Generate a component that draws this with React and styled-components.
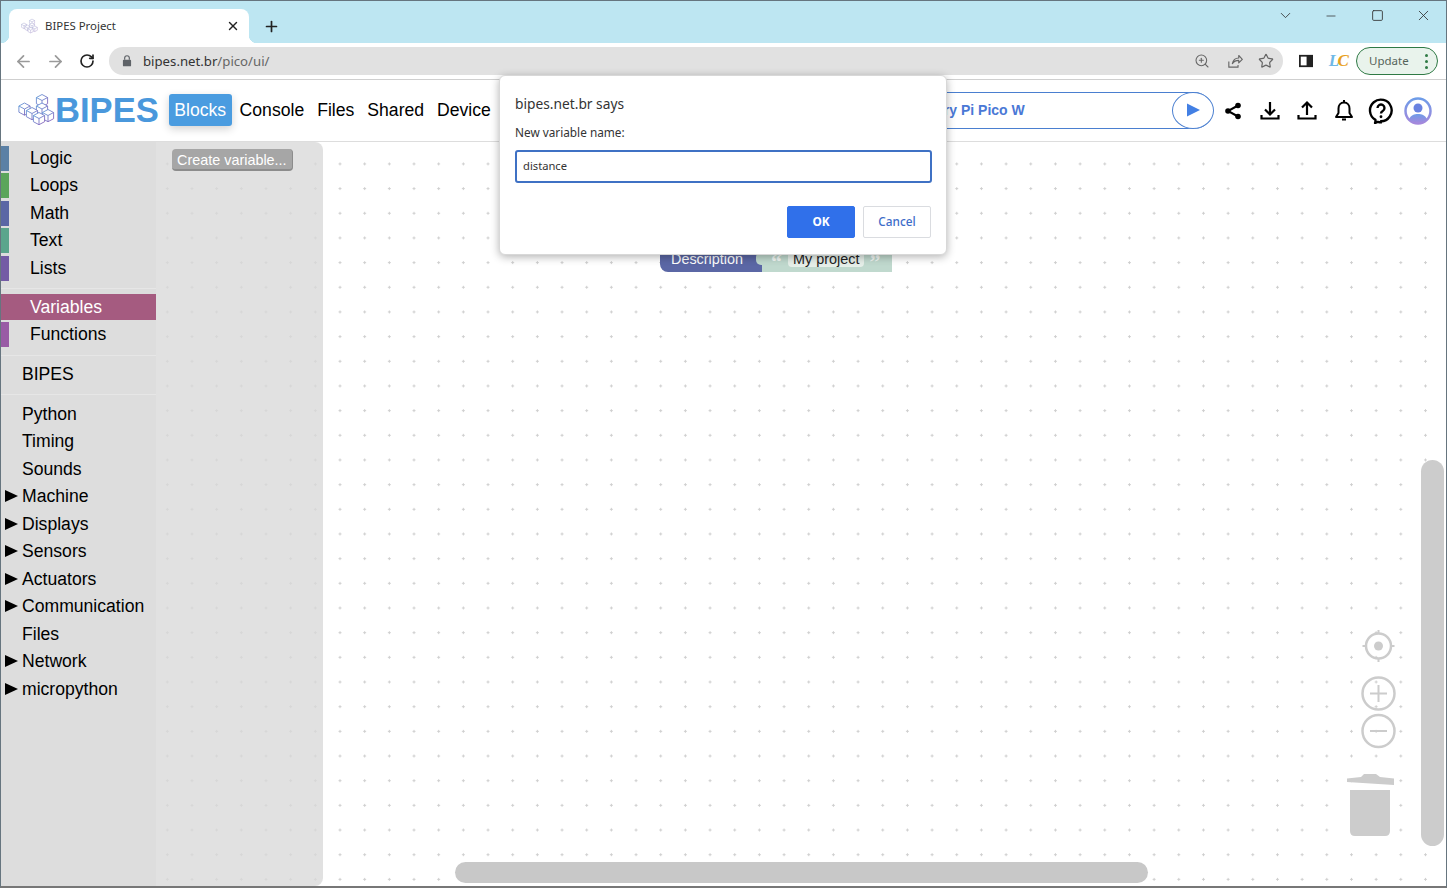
import React from 'react';
import styled, { createGlobalStyle } from 'styled-components';
import {
  ArrowLeft,
  ArrowRight,
  RotateCw,
  ChevronDown,
  Minus,
  Square,
  X,
  Plus,
  ZoomIn,
  Star,
} from 'lucide-react';

const UI_FONT = `"Noto Sans", "Open Sans", sans-serif`;
const PAGE_FONT = `"Liberation Sans", Arial, sans-serif`;

const Global = createGlobalStyle`
  html, body { margin: 0; padding: 0; height: 100%; overflow: hidden; background: #fff; }
  * { box-sizing: border-box; }
`;

const Frame = styled.div`
  position: relative;
  width: 1447px;
  height: 888px;
  display: flex;
  flex-direction: column;
  overflow: hidden;
  background: #fff;
  border: 1px solid #66757f;
  border-bottom: 2px solid #777;
  font-family: ${PAGE_FONT};
`;

const TabStrip = styled.div`
  height: 42px;
  flex: none;
  display: flex;
  align-items: flex-end;
  padding-left: 8px;
  background: #bde6f2;
`;

const Tab = styled.div`
  position: relative;
  width: 240px;
  height: 34px;
  display: flex;
  align-items: center;
  padding: 0 9px 0 12px;
  background: #fff;
  border-radius: 8px 8px 0 0;
  font: 11.4px ${UI_FONT};
  color: #333;
  &::before,
  &::after {
    content: '';
    position: absolute;
    bottom: 0;
    width: 8px;
    height: 8px;
  }
  &::before {
    left: -8px;
    background: radial-gradient(circle at 0 0, transparent 8px, #fff 8.5px);
  }
  &::after {
    right: -8px;
    background: radial-gradient(circle at 100% 0, transparent 8px, #fff 8.5px);
  }
`;

const TabTitle = styled.span`
  flex: 1;
  margin: 0 0 2px 7px;
`;

const NewTab = styled.div`
  width: 28px;
  height: 34px;
  margin-left: 8px;
  display: flex;
  align-items: center;
  justify-content: center;
  color: #222;
`;

const WindowControls = styled.div`
  margin-left: auto;
  align-self: flex-start;
  display: flex;
`;

const WindowButton = styled.div`
  width: 46px;
  height: 29px;
  display: flex;
  align-items: center;
  justify-content: center;
  color: #333;
`;

const Toolbar = styled.div`
  height: 37px;
  flex: none;
  display: flex;
  align-items: flex-start;
  padding: 4px 8px 0 6px;
  background: #fff;
  border-bottom: 1px solid #cfcfcf;
`;

const NavButton = styled.div`
  width: 32px;
  height: 28px;
  flex: none;
  display: flex;
  align-items: center;
  justify-content: center;
  color: ${p => (p.$dim ? '#9a9a9a' : '#333')};
`;

const AddressBar = styled.div`
  flex: 1;
  height: 28px;
  margin-left: 6px;
  margin-right: 7px;
  display: flex;
  align-items: center;
  padding: 0 1px 0 11px;
  border-radius: 14px;
  background: #e1e1e1;
  font: 13.2px ${UI_FONT};
  color: #333;
`;

const UrlPath = styled.span`
  color: #666;
`;

const Url = styled.div`
  flex: 1;
  margin-left: 9px;
`;

const AddressIcon = styled.div`
  width: 32px;
  height: 28px;
  display: flex;
  align-items: center;
  justify-content: center;
  color: #666;
`;

const ExtensionMark = styled.div`
  width: 32px;
  height: 28px;
  flex: none;
  display: flex;
  align-items: center;
  justify-content: center;
  font: italic 700 17px "Liberation Serif", serif;
  letter-spacing: -1.5px;
`;

const ExtensionLetter = styled.span`
  color: ${p => p.$color};
`;

const UpdatePill = styled.div`
  width: 82px;
  height: 28px;
  margin-left: 2px;
  flex: none;
  display: flex;
  align-items: center;
  justify-content: space-between;
  padding: 0 9px 2px 12px;
  border: 1px solid #2f7a45;
  border-radius: 14px;
  background: #e9f3ec;
  font: 11.5px ${UI_FONT};
  color: #55635a;
`;

const MenuDots = styled.span`
  display: flex;
  flex-direction: column;
  gap: 3px;
  margin-top: 2px;
  i {
    display: block;
    width: 3px;
    height: 3px;
    border-radius: 50%;
    background: #2f7a45;
  }
`;

const AppHeader = styled.header`
  height: 62px;
  flex: none;
  display: flex;
  align-items: center;
  padding: 0 10px 2px 17px;
  background: #fff;
  border-bottom: 1px solid #ddd;
`;

const LogoText = styled.span`
  margin-top: 2px;
  font-size: 34.6px;
  font-weight: 700;
  color: #4a98dc;
`;

const Nav = styled.nav`
  margin-left: 10px;
  display: flex;
  align-items: center;
  gap: 13px;
`;

const NavItem = styled.div`
  font-size: 17.6px;
  line-height: 32px;
  color: ${p => (p.$active ? '#fff' : '#000')};
  ${p =>
    p.$active &&
    `
    margin-right: -5px;
    padding: 0 5.5px;
    border-radius: 3px;
    background: #4a9ce0;
    box-shadow: 0 3px 8px rgba(0, 0, 0, 0.18);
  `}
`;

const DevicePill = styled.div`
  flex: 1;
  height: 37px;
  margin: 2px 0 0 8px;
  display: flex;
  align-items: center;
  padding: 0 0 2px 388px;
  position: relative;
  border: 1.5px solid #4a7fd0;
  border-radius: 19px;
  font-size: 14px;
  font-weight: 700;
  color: #4a78d6;
`;

const PlayButton = styled.div`
  position: absolute;
  right: -1.5px;
  top: -1.5px;
  width: 42px;
  height: 37px;
  display: flex;
  align-items: center;
  justify-content: center;
  border: 1.5px solid #4a7fd0;
  border-radius: 50%;
  background: #fff;
`;

const HeaderIcons = styled.div`
  margin: 2px 0 0 1px;
  display: flex;
`;

const HeaderIcon = styled.div`
  width: 37px;
  height: 37px;
  display: flex;
  align-items: center;
  justify-content: center;
`;

const Main = styled.main`
  flex: 1;
  min-height: 0;
  display: flex;
`;

const Sidebar = styled.aside`
  width: 155px;
  flex: none;
  padding-top: 2.25px;
  background: #ddd;
`;

const Row = styled.div`
  position: relative;
  height: ${p => (p.$selected ? 28 : 27.5)}px;
  display: flex;
  align-items: center;
  padding-left: ${p => (p.$category ? 29 : 21)}px;
  font-size: 17.6px;
  color: ${p => (p.$selected ? '#fff' : '#000')};
  &::before {
    content: '';
    position: absolute;
    z-index: 0;
    left: 0;
    top: 1.25px;
    bottom: 1.25px;
    width: ${p => (p.$selected ? '100%' : '8px')};
    background: ${p => p.$color || 'transparent'};
  }
  span {
    position: relative;
  }
`;

const Arrow = styled.i`
  position: absolute;
  left: 4px;
  top: 7px;
  border-left: 13px solid #000;
  border-top: 6.5px solid transparent;
  border-bottom: 6.5px solid transparent;
`;

const Separator = styled.div`
  height: ${p => p.$height}px;
  padding-top: ${p => p.$line}px;
  &::after {
    content: '';
    display: block;
    height: 1px;
    background: #e6e6e6;
  }
`;

const Workspace = styled.section`
  position: relative;
  flex: 1;
  min-width: 0;
  overflow: hidden;
  background: #fff;
`;

const GridLayer = styled.svg`
  position: absolute;
  inset: 0;
  width: 100%;
  height: 100%;
`;

const Flyout = styled.div`
  position: relative;
  width: 167px;
  height: 100%;
  padding: 7px 0 0 16px;
  background: rgba(216, 216, 216, 0.78);
  border-radius: 0 8px 8px 0;
`;

const FlyoutButton = styled.div`
  width: 121px;
  height: 22px;
  padding-left: 5px;
  border-radius: 4px;
  background: #a6a6a6;
  border-right: 1px solid #8c8c8c;
  border-bottom: 2px solid #8c8c8c;
  font-size: 14.4px;
  line-height: 22px;
  color: #fff;
  white-space: nowrap;
`;

const Block = styled.div`
  position: absolute;
  left: 504px;
  top: 103px;
  height: 27px;
  display: flex;
  font-size: 14.4px;
`;

const BlockLabel = styled.div`
  position: relative;
  width: 102px;
  padding: 6px 0 0 11px;
  line-height: 17px;
  background: #5b67a5;
  border-radius: 0 0 0 8px;
  color: #fff;
  &::after {
    content: '';
    position: absolute;
    right: -1px;
    top: 7px;
    width: 7px;
    height: 13px;
    border-radius: 5px 0 0 5px;
    background: #c0d9ce;
  }
`;

const BlockValue = styled.div`
  width: 130px;
  display: flex;
  align-items: flex-start;
  padding: 7px 0 0 9px;
  background: #c0d9ce;
  color: #222;
`;

const Quote = styled.span`
  width: 18px;
  flex: none;
  height: 14px;
  font: 700 22px/20px "Liberation Serif", serif;
  color: #f2f7f4;
  &:last-child {
    margin-left: 5px;
  }
`;

const BlockField = styled.span`
  height: 15px;
  flex: none;
  line-height: 15px;
  padding: 0 5px;
  margin-left: -1px;
  border-radius: 4px;
  background: #e6efe9;
  white-space: nowrap;
`;

const VerticalThumb = styled.div`
  position: absolute;
  right: 2px;
  top: 318px;
  width: 23px;
  height: 386px;
  border-radius: 12px;
  background: #ccc;
`;

const HorizontalThumb = styled.div`
  position: absolute;
  left: 298.500px;
  bottom: 3px;
  width: 693px;
  height: 21.5px;
  border-radius: 11px;
  background: #c8c8c8;
`;

const CanvasControls = styled.svg`
  position: absolute;
  right: 48px;
  top: 486px;
  width: 52px;
  height: 212px;
`;

const Dialog = styled.div`
  position: absolute;
  left: 498px;
  top: 74px;
  width: 448px;
  height: 180px;
  padding: 17px 14px 0 15px;
  background: #fff;
  border: 1px solid #d8d8d8;
  border-radius: 6px;
  box-shadow: 0 2px 8px rgba(0, 0, 0, 0.3);
  font-family: ${UI_FONT};
  color: #333;
`;

const DialogTitle = styled.div`
  font-size: 13.75px;
  line-height: 22px;
`;

const DialogMessage = styled.div`
  margin-top: 9px;
  font-size: 11.8px;
  line-height: 17px;
`;

const DialogInput = styled.div`
  height: 33px;
  margin-top: 9px;
  padding-left: 6px;
  border: 2px solid #3f71c4;
  border-radius: 3px;
  font-size: 11.2px;
  line-height: 28px;
`;

const DialogActions = styled.div`
  margin: 23px 1px 0 0;
  display: flex;
  justify-content: flex-end;
  gap: 8px;
`;

const DialogButton = styled.div`
  width: 68px;
  height: 32px;
  text-align: center;
  font-size: 11.8px;
  line-height: 28px;
  border-radius: 2px;
  border: 1px solid ${p => (p.$primary ? '#3070ea' : '#dadce0')};
  background: ${p => (p.$primary ? '#3070ea' : '#fff')};
  color: ${p => (p.$primary ? '#fff' : '#3d6dc9')};
  font-weight: ${p => (p.$primary ? 700 : 500)};
`;

const categories = [
  { label: 'Logic', color: '#5b80a5' },
  { label: 'Loops', color: '#5ba55b' },
  { label: 'Math', color: '#5b67a5' },
  { label: 'Text', color: '#5ba58c' },
  { label: 'Lists', color: '#745ba5' },
];

const extensions = [
  { label: 'Python' },
  { label: 'Timing' },
  { label: 'Sounds' },
  { label: 'Machine', arrow: true },
  { label: 'Displays', arrow: true },
  { label: 'Sensors', arrow: true },
  { label: 'Actuators', arrow: true },
  { label: 'Communication', arrow: true },
  { label: 'Files' },
  { label: 'Network', arrow: true },
  { label: 'micropython', arrow: true },
];

const cubes = [
  [24, 7.5],
  [24, 16],
  [6.5, 16],
  [14, 20.5],
  [30, 22.5],
  [21, 25.5],
];

function CubeLogo({ size, height, id, muted }) {
  return (
    <svg width={size} height={height} viewBox="0 0 37 33" fill="none">
      <defs>
        <linearGradient id={id} x1="0" y1="0" x2="1" y2="1">
          <stop offset="0" stopColor={muted ? '#9aa6cf' : '#5f9bd8'} />
          <stop offset="1" stopColor={muted ? '#a88fc9' : '#8a5cb8'} />
        </linearGradient>
      </defs>
      {cubes.map(([x, y]) => (
        <g key={`${x}-${y}`} stroke={`url(#${id})`} strokeWidth="0.9" strokeLinejoin="round">
          <path
            fill="#fff"
            d={`M${x} ${y - 6}l5.6 3v6.2l-5.6 3-5.6-3v-6.2z`}
          />
          <path d={`M${x - 5.6} ${y - 3}l5.6 3 5.6-3M${x} ${y}v6.2`} />
        </g>
      ))}
    </svg>
  );
}

function Icon({ children, size = 24, ...rest }) {
  return (
    <svg width={size} height={size} viewBox="0 0 24 24" fill="none" {...rest}>
      {children}
    </svg>
  );
}

export default function App() {
  return (
    <Frame>
      <Global />
      <TabStrip>
        <Tab>
          <CubeLogo size={17} height={16} id="favicon" muted />
          <TabTitle>BIPES Project</TabTitle>
          <X size={14} strokeWidth={2.4} color="#222" />
        </Tab>
        <NewTab>
          <Plus size={17} strokeWidth={2.4} />
        </NewTab>
        <WindowControls>
          <WindowButton>
            <ChevronDown size={17} strokeWidth={1.2} />
          </WindowButton>
          <WindowButton>
            <Minus size={14} strokeWidth={1.3} />
          </WindowButton>
          <WindowButton>
            <Square size={13} strokeWidth={1.6} />
          </WindowButton>
          <WindowButton>
            <X size={17} strokeWidth={1.2} />
          </WindowButton>
        </WindowControls>
      </TabStrip>

      <Toolbar>
        <NavButton $dim>
          <ArrowLeft size={19} strokeWidth={2.2} />
        </NavButton>
        <NavButton $dim>
          <ArrowRight size={19} strokeWidth={2.2} />
        </NavButton>
        <NavButton>
          <RotateCw size={16} strokeWidth={2.5} color="#222" />
        </NavButton>
        <AddressBar>
          <Icon size={14} style={{ color: '#5f6368' }}>
            <rect x="5" y="10" width="14" height="11" rx="1.5" fill="currentColor" />
            <path d="M8 10V7a4 4 0 0 1 8 0v3" stroke="currentColor" strokeWidth="2" />
          </Icon>
          <Url>
            bipes.net.br<UrlPath>/pico/ui/</UrlPath>
          </Url>
          <AddressIcon>
            <ZoomIn size={16} strokeWidth={1.6} />
          </AddressIcon>
          <AddressIcon>
            <Icon size={17}>
              <path
                d="M4 12v8h13v-3M9 15c1-5 5-8 9-8V3.500l5 5.500-5 5v-3.500c-4 0-7 1.500-9 4.500z"
                stroke="currentColor"
                strokeWidth="1.6"
                strokeLinejoin="round"
              />
            </Icon>
          </AddressIcon>
          <AddressIcon>
            <Star size={16} strokeWidth={1.8} />
          </AddressIcon>
        </AddressBar>
        <NavButton>
          <Icon size={14}>
            <rect x="1.500" y="3" width="21" height="18" fill="#fff" stroke="#222" strokeWidth="3" />
            <rect x="13" y="3" width="10" height="18" fill="#222" />
          </Icon>
        </NavButton>
        <ExtensionMark>
          <ExtensionLetter $color="#6fb8e6">L</ExtensionLetter>
          <ExtensionLetter $color="#e8a020">C</ExtensionLetter>
        </ExtensionMark>
        <UpdatePill>
          Update
          <MenuDots>
            <i />
            <i />
            <i />
          </MenuDots>
        </UpdatePill>
      </Toolbar>

      <AppHeader>
        <CubeLogo size={37} height={33} id="logo" />
        <LogoText>BIPES</LogoText>
        <Nav>
          <NavItem $active>Blocks</NavItem>
          <NavItem>Console</NavItem>
          <NavItem>Files</NavItem>
          <NavItem>Shared</NavItem>
          <NavItem>Device</NavItem>
        </Nav>
        <DevicePill>
          Raspberry Pi Pico W
          <PlayButton>
            <svg width="16" height="16" viewBox="0 0 16 16">
              <path d="M2 1.500L15 8 2 14.500z" fill="#4380e4" />
            </svg>
          </PlayButton>
        </DevicePill>
        <HeaderIcons>
          <HeaderIcon>
            <Icon>
              <path d="M17 6.500L7 12l10 5.500" stroke="#000" strokeWidth="2" />
              <circle cx="17" cy="6.500" r="2.800" fill="#000" />
              <circle cx="7" cy="12" r="2.800" fill="#000" />
              <circle cx="17" cy="17.500" r="2.800" fill="#000" />
            </Icon>
          </HeaderIcon>
          <HeaderIcon>
            <Icon>
              <path
                d="M12 3v12M7 10.500l5 5 5-5M3.500 16v3.500h17V16"
                stroke="#000"
                strokeWidth="2.200"
              />
            </Icon>
          </HeaderIcon>
          <HeaderIcon>
            <Icon>
              <path
                d="M12 16V4M7 8.500l5-5 5 5M3.500 16v3.500h17V16"
                stroke="#000"
                strokeWidth="2.200"
              />
            </Icon>
          </HeaderIcon>
          <HeaderIcon>
            <Icon>
              <path
                d="M12 3.500c-3.600 0-5.500 2.800-5.500 6v4.500L4 18h16l-2.500-4V9.500c0-3.200-1.900-6-5.500-6z"
                stroke="#000"
                strokeWidth="2"
                strokeLinejoin="round"
              />
              <path d="M10 20.500h4" stroke="#000" strokeWidth="2" />
              <path d="M12 1v2.500" stroke="#000" strokeWidth="2" />
            </Icon>
          </HeaderIcon>
          <HeaderIcon>
            <Icon size={26}>
              <path
                d="M12 22.500c-1 0-2-.2-3-.5-1 .6-1.700 1-2.500 1 .4-1 .5-1.800.4-2.800A10 10 0 1 1 12 21.500z"
                stroke="#000"
                strokeWidth="2.200"
                strokeLinejoin="round"
              />
              <path
                d="M8.800 9.200a3.200 3.200 0 1 1 4.800 2.800c-1 .6-1.600 1.200-1.600 2.400"
                stroke="#000"
                strokeWidth="2.200"
              />
              <circle cx="12" cy="17.300" r="1.300" fill="#000" />
            </Icon>
          </HeaderIcon>
          <HeaderIcon>
            <svg width="28" height="28" viewBox="0 0 28 28" fill="none">
              <defs>
                <linearGradient id="avatar" x1="0" y1="0" x2="0" y2="1">
                  <stop offset="0" stopColor="#6e9ce8" />
                  <stop offset="1" stopColor="#a488dc" />
                </linearGradient>
              </defs>
              <circle cx="14" cy="14" r="12.500" stroke="url(#avatar)" strokeWidth="2.500" fill="#fff" />
              <circle cx="14" cy="11" r="4.500" fill="#6a82e0" />
              <path d="M5 22c2-4 5.500-5 9-5s7 1 9 5a12 12 0 0 1-18 0z" fill="url(#avatar)" />
            </svg>
          </HeaderIcon>
        </HeaderIcons>
      </AppHeader>

      <Main>
        <Sidebar>
          {categories.map(item => (
            <Row key={item.label} $category $color={item.color}>
              <span>{item.label}</span>
            </Row>
          ))}
          <Separator $height={11.25} $line={6} />
          <Row $category $selected $color="#a55b80">
            <span>Variables</span>
          </Row>
          <Row $category $color="#995ba5">
            <span>Functions</span>
          </Row>
          <Separator $height={12} $line={6.5} />
          <Row>
            <span>BIPES</span>
          </Row>
          <Separator $height={12.5} $line={6} />
          {extensions.map(item => (
            <Row key={item.label}>
              {item.arrow && <Arrow />}
              <span>{item.label}</span>
            </Row>
          ))}
        </Sidebar>

        <Workspace>
          <GridLayer>
            <defs>
              <pattern
                id="grid"
                x="-1.02"
                y="9.600"
                width="24.67"
                height="24.67"
                patternUnits="userSpaceOnUse"
              >
                <path d="M10.830 12.330h3M12.330 10.830v3" stroke="#cfcfcf" strokeWidth="1" />
              </pattern>
            </defs>
            <rect width="100%" height="100%" fill="url(#grid)" />
          </GridLayer>
          <Flyout>
            <FlyoutButton>Create variable...</FlyoutButton>
          </Flyout>
          <Block>
            <BlockLabel>Description</BlockLabel>
            <BlockValue>
              <Quote>“</Quote>
              <BlockField>My project</BlockField>
              <Quote>”</Quote>
            </BlockValue>
          </Block>
          <VerticalThumb />
          <HorizontalThumb />
          <CanvasControls viewBox="0 0 52 212" fill="none" stroke="#ccc">
            <circle cx="32.500" cy="18" r="12.500" strokeWidth="2.500" />
            <circle cx="32.500" cy="18" r="4.500" fill="#ccc" stroke="none" />
            <path d="M32.500 2v4M32.500 30v4M16.500 18h4M44.500 18h4" strokeWidth="2" />
            <circle cx="32.500" cy="65.500" r="16" strokeWidth="2.500" />
            <path d="M32.500 57v17M24 65.500h17" strokeWidth="2" />
            <circle cx="32.500" cy="103" r="16" strokeWidth="2.500" />
            <path d="M24 103h17" strokeWidth="2" />
            <path
              d="M1 150.500l14-1.500 3-3h12l4 3 14 1.500v6.500l-47-3z"
              fill="#ccc"
              stroke="none"
            />
            <path
              d="M4 162h40v41q0 5-5 5H9q-5 0-5-5z"
              fill="#ccc"
              stroke="none"
            />
          </CanvasControls>
        </Workspace>
      </Main>

      <Dialog>
        <DialogTitle>bipes.net.br says</DialogTitle>
        <DialogMessage>New variable name:</DialogMessage>
        <DialogInput>distance</DialogInput>
        <DialogActions>
          <DialogButton $primary>OK</DialogButton>
          <DialogButton>Cancel</DialogButton>
        </DialogActions>
      </Dialog>
    </Frame>
  );
}
